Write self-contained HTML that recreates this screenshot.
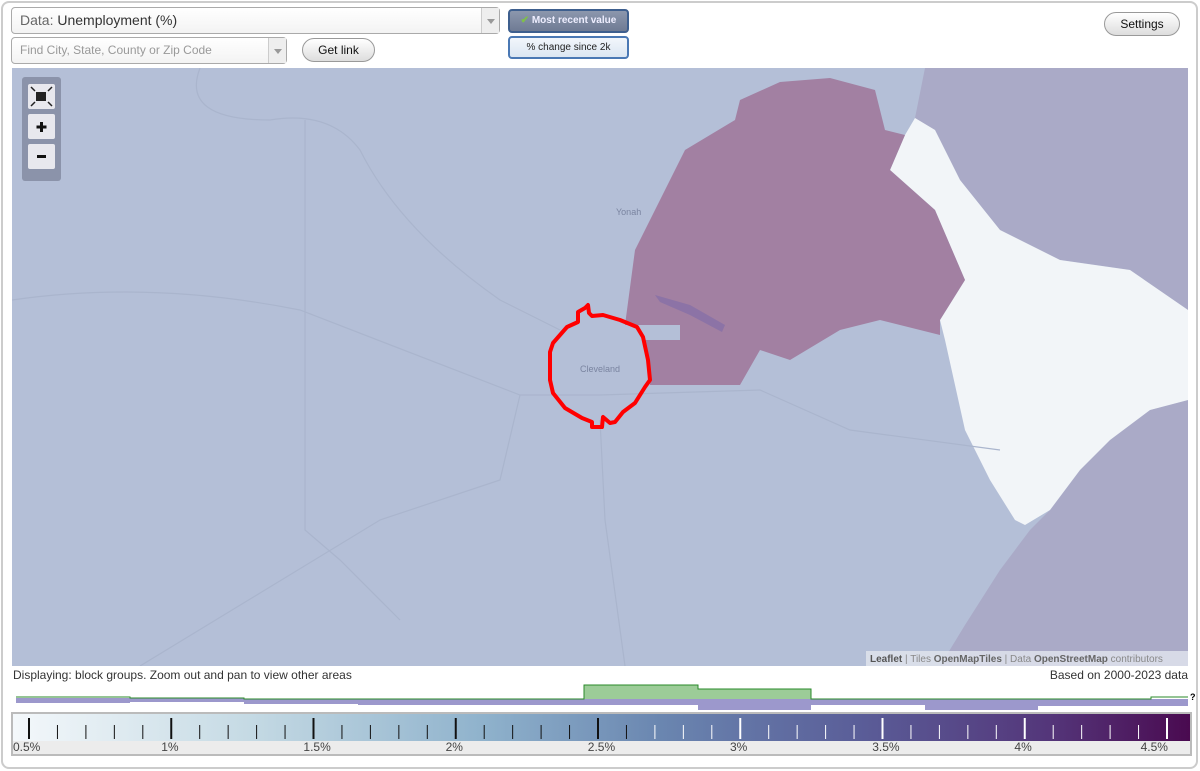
<!DOCTYPE html>
<html><head><meta charset="utf-8"><style>
*{box-sizing:border-box}
body{margin:0;width:1200px;height:771px;background:#fff;font-family:"Liberation Sans",Arial,sans-serif;overflow:hidden;position:relative}
.frame{position:absolute;left:1px;top:1px;width:1197px;height:768px;border:2px solid #ccc;border-radius:8px}
.sel{position:absolute;background:linear-gradient(#fff,#f3f3f3);border:1px solid #aaa;border-radius:4px;color:#333}
.dd{position:absolute;right:0;top:0;bottom:0;width:18px;border-left:1px solid #ccc;background:#eee}
.dd:after{content:"";position:absolute;left:5px;top:50%;margin-top:-2px;border-left:4px solid transparent;border-right:4px solid transparent;border-top:5px solid #999}
.btn{position:absolute;border:1px solid #999;border-radius:12px;background:linear-gradient(#fff,#ddd);font-size:12px;text-align:center;color:#111}
.tg{position:absolute;border:2px solid #4a78b4;border-radius:4px;font-size:10px;text-align:center}
</style></head><body>
<div class="frame"></div>
<div class="sel" style="left:11px;top:7px;width:489px;height:27px;font-size:14px;line-height:25px;padding-left:8px"><span style="color:#666">Data:</span> Unemployment (%)<div class="dd"></div></div>
<div class="sel" style="left:11px;top:37px;width:276px;height:27px;font-size:12px;line-height:25px;padding-left:8px;color:#999">Find City, State, County or Zip Code<div class="dd"></div></div>
<div class="btn" style="left:302px;top:38px;width:73px;height:24px;line-height:22px">Get link</div>
<div class="tg" style="left:508px;top:9px;width:121px;height:24px;line-height:20px;background:linear-gradient(#8c97ad,#6f7b94);color:#eef;font-weight:bold;border-color:#3e5f8e"><span style="color:#7fc04a">✔</span> Most recent value</div>
<div class="tg" style="left:508px;top:36px;width:121px;height:23px;line-height:19px;background:linear-gradient(#f2f6fb,#dbe6f2);color:#222">% change since 2k</div>
<div class="btn" style="left:1104px;top:12px;width:76px;height:24px;line-height:22px">Settings</div>

<svg style="position:absolute;left:12px;top:68px" width="1176" height="598" viewBox="12 68 1176 598">
<rect x="12" y="68" width="1176" height="598" fill="#b4bfd7"/>
<path d="M940 68 L1188 68 L1188 310 L1130 270 L1060 260 L1000 230 L960 180 L935 130 L915 118 L925 68Z" fill="#aaaac7"/>
<path d="M1188 400 L1188 666 L940 666 L965 625 L1000 570 L1030 530 L1050 510 L1080 470 L1110 440 L1150 410Z" fill="#aaaac7"/>
<path d="M915 118 L935 130 L960 180 L1000 230 L1060 260 L1130 270 L1188 310 L1188 400 L1150 410 L1110 440 L1080 470 L1050 510 L1025 525 L1015 520 L990 480 L965 430 L945 340 L940 320 L965 280 L935 210 L890 170 L905 135Z" fill="#f2f5f8"/>
<path d="M740 100 L780 82 L830 78 L875 90 L885 130 L905 135 L890 170 L935 210 L965 280 L940 320 L940 335 L880 320 L840 330 L790 360 L760 350 L740 385 L650 385 L645 340 L680 340 L680 325 L625 325 L635 250 L685 150 L735 120Z" fill="#a280a2"/>
<path d="M655 295 L690 305 L725 325 L722 332 L690 315 L660 302Z" fill="#8c73a6"/>
<g fill="none" stroke="#aab5cd" stroke-width="1.2">
<path d="M12 300 Q150 280 300 310 L520 395 L600 395 L760 390 L850 430 L1000 450"/>
<path d="M200 68 Q180 120 270 120 Q330 110 360 150 Q400 230 500 300 L560 330"/>
<path d="M600 420 L605 520 L625 666"/>
<path d="M520 395 L500 480 L380 520 L140 666"/>
<path d="M305 120 L305 530 L340 560 L400 620"/>
</g>
<path d="M588 305 L589 313 L592 316 L603 315 L620 320 L637 327 L643 337 L648 360 L650 380 L645 387 L635 403 L623 412 L615 422 L610 423 L603 417 L602 427 L592 427 L592 422 L582 418 L565 408 L553 393 L550 380 L550 352 L553 343 L567 327 L578 322 L578 312 L585 308Z" fill="none" stroke="#f00" stroke-width="4" stroke-linejoin="round"/>
<text x="580" y="372" font-size="9" fill="#7a84a0" font-family="Liberation Sans">Cleveland</text>
<text x="616" y="215" font-size="9" fill="#7a84a0" font-family="Liberation Sans">Yonah</text>
<rect x="22" y="77" width="39" height="104" rx="3" fill="#8b93aa"/>
<rect x="28" y="84" width="27" height="25" rx="2" fill="#e8e8ee"/>
<rect x="36" y="92" width="10" height="9" fill="#222"/><path d="M31 87 L35 91 M52 87 L48 91 M31 106 L35 102 M52 106 L48 102" stroke="#222" stroke-width="1.5"/>
<rect x="28" y="114" width="27" height="25" rx="2" fill="#e8e8ee"/>
<path d="M41.5 122 V132 M36.5 127 H46.5" stroke="#111" stroke-width="3"/>
<rect x="28" y="144" width="27" height="25" rx="2" fill="#e8e8ee"/>
<path d="M37 156.5 H46" stroke="#111" stroke-width="3"/>
<rect x="866" y="651" width="322" height="15" fill="#dfe3ec" opacity=".85"/>
<text x="870" y="662" font-size="10" fill="#888" font-family="Liberation Sans"><tspan font-weight="bold" fill="#555">Leaflet</tspan> | Tiles <tspan font-weight="bold" fill="#666">OpenMapTiles</tspan> | Data <tspan font-weight="bold" fill="#666">OpenStreetMap</tspan> contributors</text>
</svg>
<div style="position:absolute;left:13px;top:668px;font-size:12px;color:#333">Displaying: block groups. Zoom out and pan to view other areas</div>
<div style="position:absolute;right:12px;top:668px;font-size:12px;color:#333">Based on 2000-2023 data</div>
<svg style="position:absolute;left:0;top:680px" width="1200" height="32">
<g fill="#9c98cc">
<rect x="16" y="18" width="114" height="5"/><rect x="130" y="18" width="114" height="4"/><rect x="244" y="19" width="114" height="5"/><rect x="358" y="19" width="113" height="6"/><rect x="471" y="19" width="113" height="6"/><rect x="584" y="19" width="114" height="6"/><rect x="698" y="19" width="113" height="11"/><rect x="811" y="19" width="114" height="6"/><rect x="925" y="19" width="113" height="11"/><rect x="1038" y="19" width="114" height="7"/><rect x="1152" y="19" width="36" height="7"/>
</g>
<rect x="584" y="5" width="114" height="14" fill="#9ccc98"/><rect x="698" y="9" width="113" height="10" fill="#9ccc98"/>
<path d="M16 17 H130 V18 H244 V19 H584 V5 H698 V9 H811 V19 H1151 V17 H1188" fill="none" stroke="#2a8a2a" stroke-width="1"/>
<text x="1190" y="20" font-size="9" font-weight="bold">?</text>
</svg>
<div style="position:absolute;left:11px;top:712px;width:1181px;height:44px;border:2px solid #bbb;background:#ececec">
<div style="position:absolute;left:0;top:0;right:0;height:27px;background:linear-gradient(90deg,#f4f8fb,#c5dae4 20%,#8fb2cc 40%,#6a86b0 55%,#5a5d98 72%,#54367a 88%,#4a0a50)"></div>
<svg style="position:absolute;left:0;top:0" width="1177" height="40">
<g stroke-width="1.3" id="t"></g>
</svg>
<div id="lb" style="position:absolute;left:0;top:26px;width:1177px;height:13px;font-size:12px;color:#444"></div>
</div>
<script>
var g=document.getElementById('t'),s='',lb='';
for(var i=0;i<=40;i++){var x=16+i*28.45;var maj=i%5==0;var c=i<=20?'#111':'#fff';if(i==21)c='#111';
s+='<line x1="'+x+'" x2="'+x+'" y1="'+(maj?4:11)+'" y2="25" stroke="'+c+'" stroke-width="'+(maj?2:1)+'"/>';}
g.innerHTML=s;
var labs=['0.5%','1%','1.5%','2%','2.5%','3%','3.5%','4%','4.5%'];
for(var j=0;j<9;j++){var x=16+j*142.2;lb+='<span style="position:absolute;left:'+(j==0?0:(j==8?x-26:x-10))+'px;top:0">'+labs[j]+'</span>';}
document.getElementById('lb').innerHTML=lb;
</script>
</body></html>
